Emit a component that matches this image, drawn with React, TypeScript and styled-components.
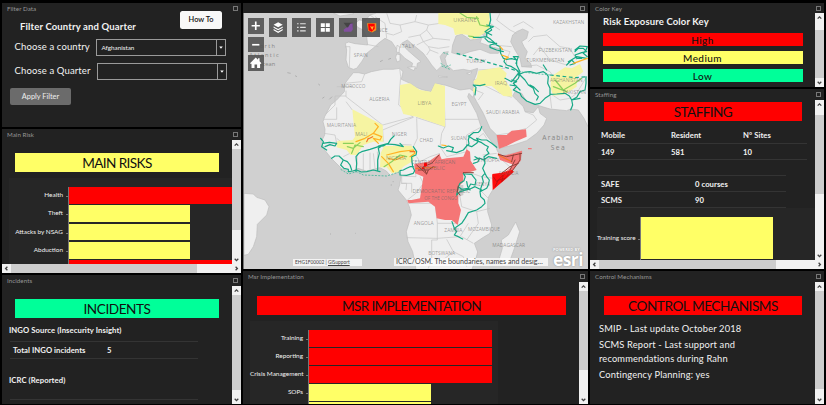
import React from "react";
import styled, { createGlobalStyle } from "styled-components";

const RED = "#ff0000";
const YELLOW = "#ffff66";
const GREEN = "#00ff99";

const Global = createGlobalStyle`
  * { box-sizing: border-box; }
  html, body { margin: 0; padding: 0; background: #000; overflow: hidden; }
  body { font-family: Lato, "Open Sans", sans-serif; color: #f2f2f2; }
`;

const Page = styled.div`
  width: 826px;
  height: 405px;
  padding: 3px 2px 1px;
  display: flex;
  gap: 2px;
  background: #000;
`;

const Column = styled.div<{ $w: number }>`
  width: ${(p) => p.$w}px;
  flex: none;
  display: flex;
  flex-direction: column;
  gap: 2px;
`;

const PanelBox = styled.section<{ $h: number }>`
  height: ${(p) => p.$h}px;
  flex: none;
  display: flex;
  flex-direction: column;
  background: #222;
  overflow: hidden;
`;

const PanelHeader = styled.header<{ $h: number }>`
  height: ${(p) => p.$h}px;
  flex: none;
  padding: 0 3px 0 5px;
  display: flex;
  justify-content: space-between;
  align-items: flex-start;
  font-size: 6.2px;
  line-height: 12px;
  letter-spacing: 0.06px;
  color: #979797;
`;

const Maximize = styled.i`
  width: 5.5px;
  height: 5.5px;
  margin-top: 2.5px;
  border: 1px solid #777;
`;

const PanelBody = styled.div`
  flex: 1;
  min-height: 0;
  display: flex;
`;

const Content = styled.div`
  flex: 1;
  min-width: 0;
  overflow: hidden;
`;

const Track = styled.div<{ $row?: boolean }>`
  flex: none;
  display: flex;
  flex-direction: ${(p) => (p.$row ? "row" : "column")};
  ${(p) => (p.$row ? "height: 9px;" : "width: 9px;")}
  background: #f1f1f1;
`;

const ArrowBox = styled.svg`
  width: 9px;
  height: 9px;
  flex: none;
  fill: none;
  stroke: #444;
  stroke-width: 1.3;
`;

const Thumb = styled.div<{ $size: number; $offset?: number; $row?: boolean }>`
  flex: none;
  background: #cdcdcd;
  ${(p) =>
    p.$row
      ? `width: ${p.$size}px; margin-left: ${p.$offset ?? 0}px;`
      : `height: ${p.$size}px; margin-top: ${p.$offset ?? 0}px;`}
`;

const Spacer = styled.div`
  flex: 1;
`;

const ARROWS = {
  up: "M2.7 5.6 4.5 3.8 6.3 5.6",
  down: "M2.7 3.8 4.5 5.6 6.3 3.8",
  left: "M5.4 2.7 3.6 4.5 5.4 6.3",
  right: "M3.6 2.7 5.4 4.5 3.6 6.3",
};

const Arrow = ({ dir }: { dir: keyof typeof ARROWS }) => (
  <ArrowBox viewBox="0 0 9 9">
    <path d={ARROWS[dir]} />
  </ArrowBox>
);

const Scrollbar = ({ size, offset, row }: { size: number; offset?: number; row?: boolean }) => (
  <Track $row={row}>
    <Arrow dir={row ? "left" : "up"} />
    <Thumb $size={size} $offset={offset} $row={row} />
    <Spacer />
    <Arrow dir={row ? "right" : "down"} />
  </Track>
);

interface PanelProps {
  title: string;
  height: number;
  header?: number;
  v?: { size: number; offset?: number };
  h?: number;
  children: React.ReactNode;
}

const Panel = ({ title, height, header = 10, v, h, children }: PanelProps) => (
  <PanelBox $h={height}>
    <PanelHeader $h={header}>
      <span>{title}</span>
      <Maximize />
    </PanelHeader>
    <PanelBody>
      <Content>{children}</Content>
      {v && <Scrollbar {...v} />}
    </PanelBody>
    {h !== undefined && <Scrollbar row size={h} />}
  </PanelBox>
);

const Banner = styled.h2<{ $bg: string; $m: string; $w: number; $ls: number }>`
  width: ${(p) => p.$w}px;
  height: 19px;
  margin: ${(p) => p.$m};
  background: ${(p) => p.$bg};
  color: #111;
  text-align: center;
  font-weight: 400;
  font-size: 13.6px;
  line-height: 21px;
  letter-spacing: ${(p) => p.$ls}px;
  white-space: nowrap;
`;

/* Filter form */
const FilterTop = styled.div`
  display: flex;
  height: 28px;
  justify-content: space-between;
  padding: 0 19px 0 18px;
`;
const FilterTitle = styled.h1`
  margin: 10px 0 0;
  font-size: 9.5px;
  line-height: 12px;
  font-weight: 700;
  letter-spacing: 0.15px;
`;
const HowTo = styled.button`
  width: 42px;
  height: 18px;
  padding: 0;
  border: 0;
  border-radius: 2.5px;
  background: #f8f8f8;
  color: #111;
  font: 600 7.4px/18px Lato, sans-serif;
`;
const Field = styled.label`
  display: flex;
  align-items: center;
  height: 17px;
  margin: 0 0 7px 12.5px;
  font-size: 9.5px;
`;
const FieldName = styled.span<{ $w: number }>`
  width: ${(p) => p.$w}px;
  letter-spacing: 0.13px;
  white-space: nowrap;
  margin-top: -3px;
`;
const Select = styled.div`
  width: 130px;
  height: 17px;
  border: 1px solid #9a9a9a;
  display: flex;
  justify-content: space-between;
  font-size: 6.3px;
  line-height: 16px;
  padding-left: 5px;
`;
const Caret = styled.svg`
  width: 9px;
  height: 15px;
  border-left: 1px solid #9a9a9a;
  fill: #fff;
`;
const Apply = styled.button`
  display: block;
  width: 61px;
  height: 17px;
  margin: 8px 0 0 8px;
  padding: 0;
  border: 0;
  border-radius: 2px;
  background: #6b6b6b;
  color: #eee;
  font: 400 7.4px/16px Lato, sans-serif;
`;

/* Bar charts */
const Chart = styled.div<{ $m: string }>`
  margin: ${(p) => p.$m};
  padding-top: 9px;
  background: #262626;
`;
const BarRow = styled.div<{ $h: number }>`
  display: flex;
  height: ${(p) => p.$h}px;
`;
const BarLabel = styled.div<{ $w: number; $h: number }>`
  width: ${(p) => p.$w}px;
  flex: none;
  text-align: right;
  padding-right: 5px;
  font-size: 6.4px;
  line-height: ${(p) => p.$h - 2}px;
  white-space: nowrap;
  position: relative;
  border-right: 1px solid #777;
  &::after {
    content: "";
    position: absolute;
    right: 0;
    top: 50%;
    width: 2px;
    height: 1px;
    background: #777;
  }
`;
const Bar = styled.div<{ $w: number; $c: string; $h: number }>`
  width: ${(p) => p.$w}px;
  flex: none;
  height: ${(p) => p.$h}px;
  background: ${(p) => p.$c};
`;

interface BarData { label: string; w: number; c: string }
const Bars = ({ rows, label, h = 18.3, m }: { rows: BarData[]; label: number; h?: number; m: string }) => (
  <Chart $m={m}>
    {rows.map((r, i) => (
      <BarRow key={i} $h={h}>
        <BarLabel $w={label} $h={h}>{r.label}</BarLabel>
        <Bar $w={r.w} $c={r.c} $h={h - 1.5} />
      </BarRow>
    ))}
  </Chart>
);

/* Tables and text blocks */
const Strong = styled.p<{ $m: string }>`
  margin: ${(p) => p.$m};
  font-weight: 700;
  font-size: 7.7px;
  line-height: 10px;
  letter-spacing: 0.08px;
`;
const Table = styled.div<{ $w: number; $m: string }>`
  width: ${(p) => p.$w}px;
  margin: ${(p) => p.$m};
`;
const Row = styled.div<{ $cols: string; $h: number; $top?: boolean }>`
  display: grid;
  grid-template-columns: ${(p) => p.$cols};
  height: ${(p) => p.$h}px;
  align-items: center;
  padding-left: 3px;
  border-bottom: 1px solid #343434;
  ${(p) => p.$top && "border-top: 1px solid #343434;"}
  font-size: 7.7px;
  font-weight: 700;
  letter-spacing: 0.06px;
`;
const KeyTitle = styled.h3`
  margin: 3px 0 4.5px 13px;
  font-size: 9.5px;
  line-height: 12px;
  font-weight: 700;
  letter-spacing: 0.13px;
`;
const Key = styled.div<{ $c: string }>`
  width: 200px;
  height: 13px;
  margin: 0 0 5.2px 12.5px;
  background: ${(p) => p.$c};
  color: #111;
  text-align: center;
  font-size: 10px;
  font-weight: 500;
  line-height: 15.5px;
  letter-spacing: 0.4px;
`;
const Note = styled.p`
  margin: 0 0 2px 9px;
  font-size: 9.3px;
  line-height: 14px;
  letter-spacing: 0.16px;
  white-space: nowrap;
`;

/* Map */
const MapFrame = styled.div`
  height: 266px;
  flex: none;
  display: flex;
  flex-direction: column;
  background: #222;
`;
const MapArea = styled.div`
  position: relative;
  height: 256px;
  background: #d0d0d0;
  border-left: 1px solid #777;
`;
const MapSvg = styled.svg`
  display: block;
  width: 344px;
  height: 256px;
  font-family: "Open Sans", sans-serif;
`;
const Tools = styled.div`
  position: absolute;
  left: 25px;
  top: 5px;
  display: flex;
  gap: 5px;
`;
const ZoomTools = styled.div`
  position: absolute;
  left: 4px;
  top: 5px;
  display: flex;
  flex-direction: column;
  gap: 3px;
`;
const Tool = styled.div<{ $w: number; $h: number }>`
  width: ${(p) => p.$w}px;
  height: ${(p) => p.$h}px;
  background: rgba(82, 82, 82, 0.9);
  svg { display: block; width: 100%; height: 100%; }
`;
const Attribution = styled.div<{ $l: number; $w: number; $size: number; $h: number }>`
  position: absolute;
  left: ${(p) => p.$l}px;
  bottom: 3px;
  width: ${(p) => p.$w}px;
  height: ${(p) => p.$h}px;
  padding-left: 2px;
  background: rgba(255, 255, 255, 0.75);
  color: #444;
  font-size: ${(p) => p.$size}px;
  line-height: ${(p) => p.$h}px;
  white-space: nowrap;
`;
const Esri = styled.div`
  position: absolute;
  right: 4px;
  bottom: 2px;
  width: 31px;
  display: flex;
  flex-direction: column;
  color: #fff;
  font: 700 17.5px/15px "Open Sans", sans-serif;
  letter-spacing: -0.6px;
  text-shadow: 0 0 1.5px #777;
`;
const Powered = styled.small`
  font-size: 4px;
  line-height: 4px;
  letter-spacing: 0.1px;
  white-space: nowrap;
`;

// x, y (centre, baseline), width, text
const LABELS: [number, number, number, string][] = [
  [122, 142, 42, "SPAIN"], [174, 65, 58, "FRANCE"], [262, 113, 44, "ITALY"],
  [435, 35, 70, "UKRAINE"], [746, 43, 94, "KAZAKHSTAN"], [706, 126, 100, "FUZBEKISTAN"],
  [676, 156, 114, "TURKMENISTAN"], [468, 158, 58, "TURKEY"], [100, 235, 72, "MOROCCO"],
  [178, 272, 61, "ALGERIA"], [313, 285, 41, "LIBYA"], [417, 289, 45, "EGYPT"],
  [543, 224, 38, "IRAQ"], [548, 313, 100, "SAUDI ARABIA"], [739, 215, 98, "AFGHANISTAN"],
  [64, 351, 88, "MAURITANIA"], [124, 378, 36, "MALI"], [238, 377, 45, "NIGER"],
  [319, 396, 41, "CHAD"], [416, 390, 46, "SUDAN"], [228, 449, 60, "NIGERIA"],
  [505, 457, 66, "ETHIOPIA"], [340, 461, 132, "CENTRAL AFRICAN"], [336, 481, 78, "REPUBLIC"],
  [566, 495, 58, "SOMALIA"], [488, 529, 44, "KENYA"],
  [364, 550, 173, "DEMOCRATIC REPUBLIC"], [363, 570, 100, "OF THE CONGO"],
  [311, 645, 60, "ANGOLA"], [400, 665, 54, "ZAMBIA"], [492, 662, 96, "MOZAMBIQUE"],
  [566, 710, 98, "MADAGASCAR"], [365, 735, 80, "BOTSWANA"], [763, 253, 70, "PAKISTAN"],
];

const LAND = [
  "M100 188 88 203 75 220 73 245 50 270 32 285 14 320 9 335 15 358 14 375 4 395 14 420 34 445 64 475 89 487 114 475 139 483 180 473 199 483 212 497 234 487 244 495 239 525 234 540 259 570 268 590 274 615 259 665 264 695 278 725 285 760 288 780H455L468 745 473 726 463 700 490 682 510 670 515 645 503 605 503 575 506 560 518 540 553 505 578 480 603 450 606 423 578 430 548 437 533 425 528 412 503 380 483 350 470 310 443 260 447 250 458 262 465 248 450 236 420 240 375 225 345 220 333 245 310 240 288 232 270 220 244 208 249 185 239 175 219 178 189 178 154 185 134 192 115 188Z",
  "M76 100 86 96 105 101 143 105 140 80 130 60 113 52 105 40 118 30 135 33 150 15 170 9H804V350L792 325 775 300 752 297 740 302 690 297 650 285 620 275 605 250 585 245 578 258 590 270 610 290 615 305 640 308 655 290 660 310 680 325 672 345 650 370 620 392 580 405 538 415 530 375 510 355 490 310 470 275 463 262 460 235 460 215 470 190 473 175 450 182 430 178 400 182 380 165 375 145 385 125 370 127 360 140 368 165 350 182 335 165 325 150 310 130 280 105 262 90 245 100 262 120 285 140 303 155 292 160 290 175 275 170 278 160 255 145 235 125 215 95 195 85 175 100 165 110 140 130 125 155 110 175 100 178 85 172 78 150 80 120Z",
  "M-228 550-200 552-190 562-165 570-153 590-160 615-188 643-190 680-200 710-215 733-228 736Z",
  "M587 636 599 665 585 710 565 765 550 768 538 745 547 715 544 690 565 675Z",
  "M231 106l8 4-2 18-8-2ZM230 132l10 2v18l-9 4-4-14ZM262 172l24-2-4 12ZM355 198l28 3-26 2ZM440 190l16-5-6 9Z",
  "M40 9 60 18 100 12 100 9Z",
];

const BORDERS =
  "M100 230H50M75 220 125 215 134 192M78 242v18l110 85 92-25M78 258H45V285L18 312M78 275 97 300M50 292v36H12M12 370 45 375 50 400M239 175 242 200 240 225 236 285 280 322M372 226 375 350 288 322M375 328H475M290 325 292 385 280 410M375 350 365 370 360 410M280 322 188 360 190 395M203 402 275 405M360 410 380 440 440 425M360 430 330 440 300 455M480 353 440 375 440 430M500 385 490 370 460 395M290 440 300 455 285 470 288 500 240 498M245 500 245 520H260L258 540M300 500 310 520 290 548 262 570M243 520H275V548M265 580 345 580 350 620 352 640 415 640M260 683 352 685 420 680 445 640M352 640V690H335V745L325 775M380 688 400 725 375 745 345 752M400 725 430 740 440 770M415 530 425 590 470 605 510 595M470 605 475 640 440 690M425 680 460 700M480 540 505 565M455 490 485 500 520 505 580 480 535 440M488 435 530 430M430 490 415 530M50 385 75 405 95 435M70 440 90 430M110 485 112 430M130 483V430M150 478V428M165 475 160 430M175 475 172 425M75 110 90 110 88 172M140 103 175 110M165 20 195 40 200 85M150 15 170 30M200 9 210 40 240 45 245 65 220 75 200 70M240 45 285 35 325 45 320 60 300 75 265 82M285 35 290 15M325 45 360 40M320 60 340 85 390 90M300 75 310 95 290 105M310 95 340 85M310 95 325 110 330 120 320 135M325 110 355 115 388 110M330 120 355 130M480 9 510 40 540 60M545 118 570 125 560 150 555 175M520 105 575 110M555 175 475 180M460 210 480 205 540 215 555 240M470 225 490 225 540 250 575 262M465 240 490 250 475 270M530 375 565 370 620 355 650 330 640 315 615 305M595 185 580 215 590 245M605 170 650 165 690 185 700 200M625 95 640 80 680 75 720 110 750 115 770 150M640 135 660 110 690 150 740 165M580 50 610 35 640 55M690 250 720 270 750 265 770 250 785 225 800 200M690 255 695 295M540 9 530 30 570 60 590 70";

const YELLOW_LANDS = [
  "M355 9H508V60L480 78 465 88 448 85 445 75 425 72 405 75 400 55 375 45 355 42Z",
  "M240 225 270 220 300 240 333 245 345 220 375 228V350L290 320 250 312 240 285Z",
  "M97 298 188 345 190 395 160 395 130 405 110 435 92 435 80 420 50 412 52 393 98 390 105 380Z",
  "M192 408 275 407 288 430 275 455 250 470 235 487 215 490 200 472 180 472 182 430Z",
  "M475 182 540 172 560 190 555 210 575 240 577 260 550 258 515 228 485 228 465 225 460 215 470 205Z",
  "M692 200 735 172 755 175 780 162 790 185 770 200 770 230 735 253 700 257 692 235Z",
  "M460 233h7l-2 18-6-6Z",
];
const RED_LANDS = [
  "M283 462 325 455 358 432 365 448 380 445 430 440 440 418 450 425 452 452 470 480 430 492 430 515 415 530 415 580 423 600 413 645 395 630 375 630 350 625 345 590 325 575 265 580 275 570 300 565 310 500 285 490Z",
  "M530 375 560 375 575 362 618 358 620 380 585 395 560 408 537 416Z",
  "M533 428 550 438 606 422 602 452 575 485 520 540 516 495 550 490 582 465 540 450Z",
];
const TEAL =
  "M2 385 10 395 5 410 20 420M8 400 28 397 50 400 45 408 30 404 15 410M35 445 45 438 57 438 70 450 62 465 72 475 85 478 85 485 98 483 110 480 124 486 140 485 160 480 180 485M70 450 82 455 90 465 95 480M108 485 110 460 108 440 116 430 125 425 150 418 175 410 190 408 200 402 185 408 175 415M175 415 178 430 173 450V480M175 408 205 400 212 388 222 378M200 402 225 404 250 410 240 400M280 410 290 425 288 435 275 440 276 455 278 470 284 482 280 490 260 496 240 495 240 482 250 480 260 475 270 470 280 470M355 408 370 414 385 408 400 413 395 425 410 428 430 420 440 408 447 402 445 390 448 378 460 368 475 367 480 362 485 350M380 422 395 425 410 428M440 405 455 410 470 400 475 393 470 385 485 390 500 390 515 400 530 412M445 378 460 388 470 392 485 398 495 405 505 410 500 420 507 430 492 440 495 460 488 475 495 490 500 500 508 510 505 525 500 535 480 545 482 560 493 570 495 580 485 590 470 600 445 608 435 625 425 640 410 650 403 657 410 664 403 675 415 680 428 687M403 655 396 635M462 450 478 444 490 450 505 440 530 445M465 440 478 448 473 456 460 460M495 490 486 500 490 515 484 530 480 545M430 490 436 500 432 512 420 520 415 530 425 538 445 535 452 522 465 525 468 510 460 500 455 493 435 492M440 515 443 530 450 540M485 540 465 530 450 537 420 545 410 555 415 530M510 9 512 30 508 45 515 60 500 70 500 80 480 82 460 82M500 80 512 88 520 95 530 105 540 110 542 130 550 145 560 148 575 146 590 150 590 165 600 185 595 195M500 45 520 50 505 58 495 65 515 75M495 85 505 95 530 100 510 105 510 112 530 120 550 125M555 145 552 155 560 165 575 170 590 180 600 192 615 186 630 185 650 190 670 185 680 192 685 200 683 220 690 235 690 255 675 265 660 280 645 283 620 273 605 260 600 250 580 240 590 230 580 220 590 215 575 210M600 192 595 205 580 220 590 230 600 240M600 195 615 210 625 225 640 235 645 250 655 260 650 270M630 225 640 230 655 245M555 205 575 215 595 190M570 225 590 228M590 150 580 140 595 140 588 160M465 255 468 232 460 225 480 227 495 223M690 253 710 252 735 250 748 258 755 270 758 285 752 300M755 270 770 262 780 245 795 240 798 220 798 200M755 270 780 265M740 165 755 150 765 160 750 165M765 120 780 108 802 110 798 120 790 130 802 140M765 125 775 115 790 115 800 125 785 128 765 135 770 145 785 145M745 155 770 140 800 145M670 165 680 180";

const TopTool = ({ children }: { children: React.ReactNode }) => (
  <Tool $w={18.3} $h={18.6}>
    <svg viewBox="0 0 18 18">{children}</svg>
  </Tool>
);
const SideTool = ({ children }: { children: React.ReactNode }) => (
  <Tool $w={15.5} $h={15.5}>
    <svg viewBox="0 0 15 15">{children}</svg>
  </Tool>
);

const WorldMap = () => (
  <MapFrame>
    <PanelHeader $h={10}>
      <span />
      <Maximize />
    </PanelHeader>
    <MapArea>
      <MapSvg viewBox="-228 9 1032 768" preserveAspectRatio="none">
        <g fill="#efefef" stroke="#bdbdbd" strokeWidth="2" strokeLinejoin="round">
          {LAND.map((d) => <path key={d} d={d} />)}
        </g>
        <g fill="#d0d0d0" stroke="#bdbdbd" strokeWidth="2">
          <path d="M398 105 408 78 425 72 440 82 452 90 485 85 480 98 520 112 545 118 535 130 510 130 480 118 450 125 420 135 395 128Z" />
          <path d="M485 72 505 65 498 82Z" />
          <path d="M590 65 608 57 625 65 620 85 605 95 612 110 622 125 615 145 632 160 635 172 605 170 600 145 585 120 572 95 578 75Z" />
        </g>
        <path d={BORDERS} fill="none" stroke="#c2c2c2" strokeWidth="2" strokeLinejoin="round" />
        <path d="M-98 188l10 2M-75 197l6 3M-5 222l5 4M7 265l6-4M28 268l8-8M180 155l8-4M205 148l8-3M212 525h4M218 515h3M30 672h3M105 670h2" stroke="#b0b0b0" strokeWidth="3" />
        <g fill="#f6f4a2">{YELLOW_LANDS.map((d) => <path key={d} d={d} />)}</g>
        <g fill="#f57676">
          {RED_LANDS.map((d) => <path key={d} d={d} />)}
          <path d="M624 414h11v4h-11ZM262 570h20l-6 8h-12Z" />
        </g>
        <path d="M418 525h12v30l-14 5Z" fill="#a8a8a8" opacity=".5" />
        <g fill="none" strokeWidth="3.6" strokeLinejoin="round" strokeLinecap="round">
          <path d={TEAL} stroke="#16a886" />
          <path d="M410 130 600 185M690 195 765 203 800 200" stroke="#16a886" strokeDasharray="11 8" strokeLinecap="butt" />
          <path d="M62 478 85 492 110 485 130 495 200 498 240 485M595 185 640 190 690 195M370 128l15 5M362 160l15 10 15-5M365 168l25 10" stroke="#43b899" strokeWidth="2.5" strokeDasharray="6 4" strokeLinecap="butt" />
          <path d="M82 410 100 415 120 398M95 430 105 405 130 410M70 400 100 400M192 470 215 455 240 435 260 440M470 20 480 45 505 50M420 9 440 22 475 25M460 80 445 78M705 210 730 240 765 220 785 205M740 245 700 230" stroke="#8bd05c" />
          <path d="M108 395 135 385 160 370 175 350 165 340M160 370 185 380 180 390 160 385 175 400M185 440 205 460 220 485M200 435 240 425 280 420 285 430 270 440M205 445 225 450 250 440M760 160 802 145M545 135 565 142 555 148M365 405 378 407M540 110 548 118" stroke="#ffb224" />
          <path d="M270 425 285 425M143 388 158 380M140 395 145 385M288 475 345 472M535 435 575 455" stroke="#f4742b" />
          <path d="M290 465 320 492 310 470 335 460 357 435M295 480 325 480 340 470M320 492 325 480M535 433 560 440 605 430M575 455 580 435M600 430 600 450 575 485 560 495 545 490 570 470 595 460M430 488 460 488M415 528 412 545 420 555M585 450 570 480" stroke="#8e4038" strokeWidth="3" />
        </g>
        <path d="M517 492 545 488 575 480 582 485 560 505 518 540Z" fill="#ff0c0c" />
        <path d="M520 500 530 515 550 495 545 515 570 490M525 530 535 510 555 505" fill="none" stroke="#a31414" strokeWidth="2" />
        <path d="M312 458h9v10l-9 4ZM306 472h6v5h-6Z" fill="#f00" />
        <g fill="#666" fillOpacity=".62" fontSize="18.5" textAnchor="middle">
          {LABELS.map(([x, y, w, t]) => (
            <text key={t} x={x} y={y} textLength={w} lengthAdjust="spacingAndGlyphs">{t}</text>
          ))}
        </g>
        <g fill="#858585" fontSize="20" textAnchor="middle">
          <text x="713" y="389" textLength="92">Arabian</text>
          <text x="713" y="421" textLength="42">Sea</text>
          <text x="-166" y="114" fontSize="17" textLength="62">North</text>
          <text x="-168" y="141" fontSize="17" textLength="88">Atlantic</text>
          <text x="-160" y="168" fontSize="17" textLength="52">Ocean</text>
        </g>
      </MapSvg>
      <ZoomTools>
        <SideTool><path d="M3.5 7.500h8M7.500 3.500v8" stroke="#fff" strokeWidth="1.600" /></SideTool>
        <SideTool><path d="M4 7.500h7" stroke="#fff" strokeWidth="1.600" /></SideTool>
        <SideTool><path d="M2 8 7.500 2.500l2.200 2.100V3.200h1.500v2.900L13 8l-.8.8-.5-.4v4.300H8.800V9.300H6.300v3.400H3.400V8.400l-.6.4Z" fill="#fff" /></SideTool>
      </ZoomTools>
      <Tools>
        <TopTool>
          <path d="M9 4 13.500 6.500 9 9 4.500 6.500ZM4.500 8.100 9 10.600l4.500-2.500v1.300L9 12 4.500 9.500ZM4.500 10.700 9 13.200l4.500-2.500V12L9 14.500 4.500 12Z" fill="#fff" />
        </TopTool>
        <TopTool><path d="M5 5.500h1.500M8 5.500h5.500M5 9h1.500M8 9h5.500M5 12.500h1.500M8 12.500h5.500" stroke="#e4e4e4" strokeWidth="1.200" /></TopTool>
        <TopTool><path d="M4.700 5h4v3.700h-4ZM9.600 5h4v3.700h-4ZM4.700 9.600h4v3.700h-4ZM9.600 9.600h4v3.700h-4Z" fill="#fff" /></TopTool>
        <TopTool><path d="M4.500 4.500h9V9l-5 1Z" fill="#444" /><path d="M4.500 11.500 7 9.500l2-.5 2-3.500 2.500-.5v6.500l-1.500 2H5Z" fill="#8350a0" /></TopTool>
        <TopTool><path d="M5 5h9v7l-4 2-4-1.500Z" fill="#f6901e" /><path d="M6 5.500h6.500v5L9.500 13.500 6.500 12Z" fill="#f00" /><path d="M8.500 8 10 10.500 11 8" stroke="#ffbd2e" fill="none" /></TopTool>
      </Tools>
      <Attribution $l={49} $w={69} $size={4.8} $h={7}>EHG1F00002 | <u>GISupport</u></Attribution>
      <Attribution $l={150} $w={154} $size={7.1} $h={8}>ICRC/OSM. The boundaries, names and desig…</Attribution>
      <Esri><Powered>POWERED BY</Powered>esri</Esri>
    </MapArea>
  </MapFrame>
);

export default function App() {
  return (
    <>
      <Global />
      <Page>
        <Column $w={239}>
          <Panel title="Filter Data" height={124} header={8}>
            <FilterTop>
              <FilterTitle>Filter Country and Quarter</FilterTitle>
              <HowTo>How To</HowTo>
            </FilterTop>
            <Field>
              <FieldName $w={81}>Choose a country</FieldName>
              <Select>Afghanistan<Caret viewBox="0 0 9 15"><path d="M2.500 6.500h4L4.500 9Z" /></Caret></Select>
            </Field>
            <Field>
              <FieldName $w={82}>Choose a Quarter</FieldName>
              <Select><i /><Caret viewBox="0 0 9 15"><path d="M2.500 6.500h4L4.500 9Z" /></Caret></Select>
            </Field>
            <Apply>Apply Filter</Apply>
          </Panel>
          <Panel title="Main Risk" height={144} header={11} v={{ size: 81 }} h={186}>
            <Banner $bg={YELLOW} $m="13px 0 6px 13px" $w={204} $ls={-0.6}>MAIN RISKS</Banner>
            <Bars
              m="0 0 0 7px"
              label={60}
              rows={[
                { label: "Health", w: 170, c: RED },
                { label: "Theft", w: 121, c: YELLOW },
                { label: "Attacks by NSAG", w: 121, c: YELLOW },
                { label: "Abduction", w: 121, c: YELLOW },
                { label: "", w: 170, c: RED },
              ]}
            />
          </Panel>
          <Panel title="Incidents" height={129} header={11} v={{ size: 95 }}>
            <Banner $bg={GREEN} $m="13px 0 7px 13px" $w={204} $ls={-0.45}>INCIDENTS</Banner>
            <Strong $m="0 0 6px 7px">INGO Source (Insecurity Insight)</Strong>
            <Table $w={188} $m="0 0 0 8px">
              <Row $cols="94px 1fr" $h={18} $top><span>Total INGO incidents</span><span>5</span></Row>
            </Table>
            <Strong $m="16px 0 14px 7px">ICRC (Reported)</Strong>
            <Table $w={188} $m="0 0 0 8px">
              <Row $cols="94px 1fr" $h={20} $top><span /></Row>
            </Table>
          </Panel>
        </Column>
        <Column $w={345}>
          <WorldMap />
          <Panel title="Msr Implementation" height={133} header={11} v={{ size: 79 }}>
            <Banner $bg={RED} $m="14px 0 6px 14px" $w={309} $ls={-0.65}>MSR IMPLEMENTATION</Banner>
            <Bars
              m="0 81px 0 7px"
              label={59}
              h={18}
              rows={[
                { label: "Training", w: 183, c: RED },
                { label: "Reporting", w: 183, c: RED },
                { label: "Crisis Management", w: 183, c: RED },
                { label: "SOPs", w: 122, c: YELLOW },
                { label: "", w: 122, c: YELLOW },
              ]}
            />
          </Panel>
        </Column>
        <Column $w={234}>
          <Panel title="Color Key" height={84} v={{ size: 48, offset: 8 }}>
            <KeyTitle>Risk Exposure Color Key</KeyTitle>
            <Key $c={RED}>High</Key>
            <Key $c={YELLOW}>Medium</Key>
            <Key $c={GREEN}>Low</Key>
          </Panel>
          <Panel title="Staffing" height={180} header={11} v={{ size: 79, offset: 6 }} h={177}>
            <Banner $bg={RED} $m="2px 0 6px 14px" $w={198} $ls={-0.6}>STAFFING</Banner>
            <Table $w={209} $m="0 0 15px 8px">
              <Row $cols="70px 72px 1fr" $h={17}><span>Mobile</span><span>Resident</span><span>N° Sites</span></Row>
              <Row $cols="70px 72px 1fr" $h={16}><span>149</span><span>581</span><span>10</span></Row>
            </Table>
            <Table $w={188} $m="0 0 0 8px">
              <Row $cols="94px 1fr" $h={17} $top><span>SAFE</span><span>0 courses</span></Row>
              <Row $cols="94px 1fr" $h={16}><span>SCMS</span><span>90</span></Row>
            </Table>
            <Bars
              m="0 0 0 7px"
              label={44}
              h={43}
              rows={[
                { label: "Training score", w: 132, c: YELLOW },
                { label: "", w: 174, c: RED },
              ]}
            />
          </Panel>
          <Panel title="Control Mechanisms" height={133} header={11} v={{ size: 98 }}>
            <Banner $bg={RED} $m="14px 0 7px 14px" $w={198} $ls={-0.45}>CONTROL MECHANISMS</Banner>
            <Note>SMIP - Last update October 2018</Note>
            <Note>SCMS Report - Last support and<br />recommendations during Rahn</Note>
            <Note>Contingency Planning: yes</Note>
          </Panel>
        </Column>
      </Page>
    </>
  );
}
